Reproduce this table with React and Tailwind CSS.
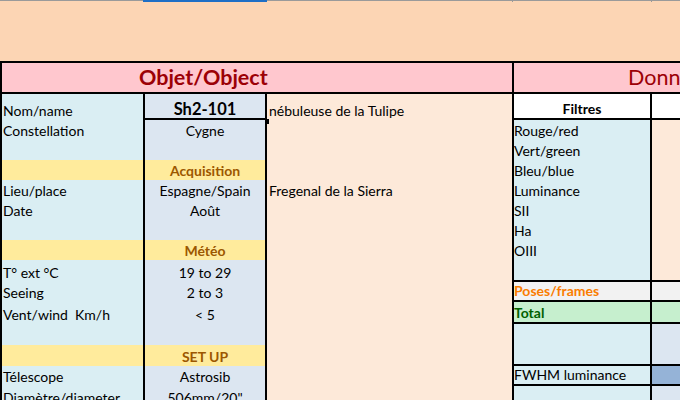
import React from 'react';

const font = { fontFamily: 'Lato, "Open Sans", sans-serif' };

// one line per spreadsheet row, same boundaries across all columns
const rows = [
  { h: 'h-[26px]', a: 'Nom/name', b: 'Sh2-101', bCls: 'bg-[#DCE6F1] font-bold text-[16.5px] border-b-2 border-black', c: 'nébuleuse de la Tulipe', d: 'Filtres', dCls: 'bg-white font-bold justify-center border-b-2 border-black', eCls: 'bg-white border-b-2 border-black', handle: true },
  { h: 'h-[20px]', a: 'Constellation', b: 'Cygne', d: 'Rouge/red' },
  { h: 'h-[20px]', d: 'Vert/green' },
  { h: 'h-[20px]', yellow: true, b: 'Acquisition', d: 'Bleu/blue' },
  { h: 'h-[20px]', a: 'Lieu/place', b: 'Espagne/Spain', c: 'Fregenal de la Sierra', d: 'Luminance' },
  { h: 'h-[20px]', a: 'Date', b: 'Août', d: 'SII' },
  { h: 'h-[20px]', d: 'Ha' },
  { h: 'h-[20px]', yellow: true, b: 'Météo', d: 'OIII' },
  { h: 'h-[22px]', a: 'T° ext °C', b: '19 to 29', dCls: 'bg-[#DAEEF3] border-b-2 border-black', eCls: 'bg-[#FDE9D9] border-b-2 border-black' },
  { h: 'h-[20px]', a: 'Seeing', b: '2 to 3', d: 'Poses/frames', dCls: 'bg-[#F2F2F2] text-[#FA7D00] font-bold border-b-2 border-black', eCls: 'bg-[#F2F2F2] border-b-2 border-black' },
  { h: 'h-[22px]', a: 'Vent/wind  Km/h', b: '< 5', d: 'Total', dCls: 'bg-[#C6EFCE] text-[#006100] font-bold border-b-2 border-black', eCls: 'bg-[#C6EFCE] border-b-2 border-black' },
  { h: 'h-[21px]', dCls: 'bg-[#DAEEF3]', eCls: 'bg-[#DCE6F1]' },
  { h: 'h-[21px]', yellow: true, b: 'SET UP', dCls: 'bg-[#DAEEF3] border-b-2 border-black', eCls: 'bg-[#DCE6F1] border-b-2 border-black' },
  { h: 'h-[20px]', a: 'Télescope', b: 'Astrosib', d: 'FWHM luminance', dCls: 'bg-[#DAEEF3] border-b-2 border-black', eCls: 'bg-[#95B3D7] border-b-2 border-black' },
  { h: 'h-[21px]', a: 'Diamètre/diameter', b: '506mm/20"', dCls: 'bg-[#DAEEF3]', eCls: 'bg-[#DCE6F1]' },
];

function Row({ r }) {
  const aBg = r.yellow ? 'bg-[#FFEB9C]' : 'bg-[#DAEEF3]';
  const bCls = r.bCls || (r.yellow ? 'bg-[#FFEB9C] text-[#9C5700] font-bold' : 'bg-[#DCE6F1]');
  const dCls = r.dCls || 'bg-[#DAEEF3]';
  const eCls = r.eCls || 'bg-[#FDE9D9]';
  return (
    <div className={`flex ${r.h}`}>
      <div className={`w-[141px] shrink-0 ${aBg} flex items-end pl-[1px] leading-[18px] whitespace-pre`}>{r.a}</div>
      <div className="relative w-[124px] shrink-0 flex border-x-2 border-black">
        <div className={`flex-1 flex items-end justify-center leading-[18px] ${bCls}`}>{r.b}</div>
        {r.handle && <div className="absolute right-[-4px] bottom-[-4px] w-[5px] h-[5px] bg-black" />}
      </div>
      <div className="w-[245px] shrink-0 bg-[#FDE9D9] flex items-end pl-[2px] leading-[18px]">{r.c}</div>
      <div className={`w-[140px] shrink-0 border-x-2 border-black flex items-end leading-[18px] ${dCls}`}>{r.d}</div>
      <div className={`flex-1 min-w-0 ${eCls}`} />
    </div>
  );
}

export default function App() {
  return (
    <div className="w-[680px] h-[400px] overflow-hidden bg-[#FCD5B4] text-[14px] text-black" style={font}>
      <div className="flex h-[2px] bg-[#FCD5B4]">
        <div className="w-[143px] border-t border-[#9a9a9a]" />
        <div className="w-[124px] bg-[#1E6FC6]" />
        <div className="w-[246px] border-t border-r border-[#9a9a9a]" />
        <div className="w-[139px] border-t border-r border-[#9a9a9a]" />
        <div className="flex-1 border-t border-[#9a9a9a]" />
      </div>
      <div className="h-[59px]" />
      <div className="border-t-2 border-l-2 border-black">
        <div className="flex h-[31px] border-b-2 border-black bg-[#FFC7CE] text-[#9C0006] text-[21.5px]">
          <div className="w-[510px] shrink-0 flex items-center pl-[137px] font-bold">Objet/Object</div>
          <div className="flex-1 min-w-0 overflow-hidden whitespace-nowrap border-l-2 border-black flex items-center pl-[114px]">Données</div>
        </div>
        {rows.map((r, i) => (
          <Row key={i} r={r} />
        ))}
      </div>
    </div>
  );
}
